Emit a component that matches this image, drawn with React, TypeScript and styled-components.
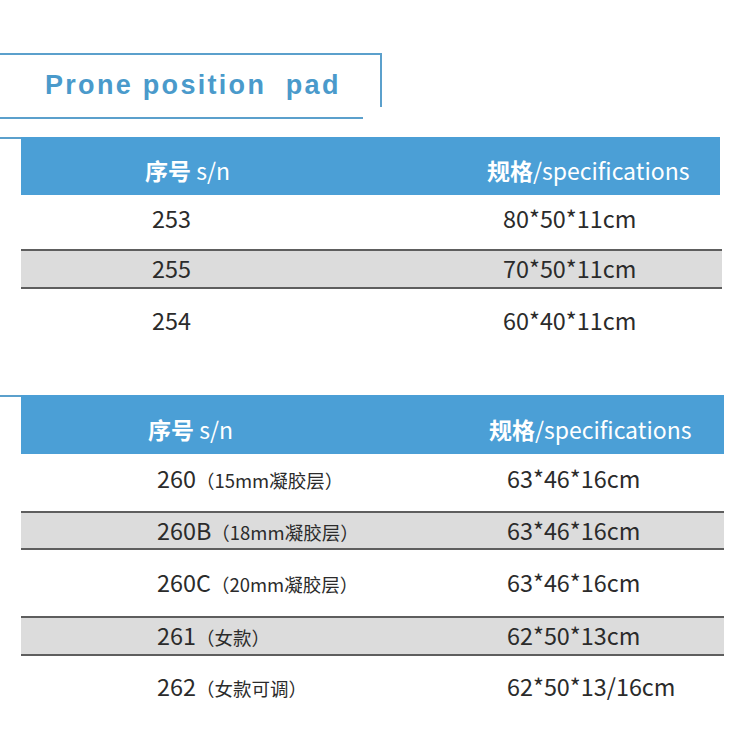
import React from "react";
import styled, { createGlobalStyle } from "styled-components";

const GlobalStyle = createGlobalStyle`
  html, body {
    margin: 0;
    padding: 0;
    background: #ffffff;
  }
  body {
    font-family: "Noto Sans CJK SC", "Noto Sans", sans-serif;
  }
`;

const Page = styled.div`
  width: 750px;
  height: 750px;
  overflow: hidden;
  display: flex;
  flex-flow: column;
`;

const TitleBox = styled.div`
  margin-top: 53px;
  width: 382px;
  height: 54px;
  border-top: 2px solid #5ba0cc;
  border-right: 2px solid #5ba0cc;
  display: flex;
  align-items: center;
  padding-left: 45px;
  padding-top: 9px;
  box-sizing: border-box;
`;

const Title = styled.h1`
  margin: 0;
  font-family: "Liberation Sans", Arial, sans-serif;
  font-weight: 700;
  font-size: 27px;
  letter-spacing: 2.3px;
  color: #4a9acb;
  white-space: pre;
`;

const TitleRule = styled.div`
  margin-top: 10px;
  width: 363px;
  height: 2px;
  background: #5ba0cc;
`;

const Table = styled.div<{ $top: number; $right: number }>`
  margin-top: ${(p) => p.$top}px;
  width: ${(p) => p.$right}px;
  display: flex;
  flex-flow: column;
`;

const HeadLine = styled.div`
  display: flex;
`;

const Tick = styled.div`
  width: 21px;
  height: 2px;
  background: #5ba0cc;
`;

const HeadBar = styled.div<{ $height: number; $c1: number; $c2: number; $trim: number }>`
  flex: 1;
  margin-right: ${(p) => p.$trim}px;
  height: ${(p) => p.$height}px;
  background: #4b9fd6;
  color: #ffffff;
  display: grid;
  grid-template-columns: ${(p) => p.$c2 - p.$c1}px 1fr;
  padding-left: ${(p) => p.$c1}px;
  align-items: center;
  padding-top: 8px;
  box-sizing: border-box;
`;

const HeadCell = styled.div`
  font-size: 23px;
  white-space: nowrap;
`;

const Strong = styled.span`
  font-weight: 700;
`;

const Latin = styled.span`
  font-weight: 400;
`;

const Row = styled.div<{
  $height: number;
  $shift: number;
  $grey?: boolean;
  $c1: number;
  $c2: number;
}>`
  margin-left: 21px;
  height: ${(p) => p.$height}px;
  display: grid;
  grid-template-columns: ${(p) => p.$c2 - p.$c1}px 1fr;
  padding-left: ${(p) => p.$c1}px;
  align-items: center;
  box-sizing: border-box;
  padding-bottom: ${(p) => p.$shift}px;
  background: ${(p) => (p.$grey ? "#dcdcdc" : "transparent")};
  border-top: ${(p) => (p.$grey ? "2px solid #5e5e5e" : "none")};
  border-bottom: ${(p) => (p.$grey ? "2px solid #5e5e5e" : "none")};
`;

const Cell = styled.div`
  font-size: 23.4px;
  color: #2b2b2b;
  white-space: nowrap;
  line-height: 1;
`;

const Note = styled.span`
  font-size: 18.5px;
`;

type Item = { code: string; note?: string; size: string; h: number; shift: number };

const table1: Item[] = [
  { code: "253", size: "80*50*11cm", h: 54, shift: 6 },
  { code: "255", size: "70*50*11cm", h: 40, shift: 0 },
  { code: "254", size: "60*40*11cm", h: 64, shift: 0 },
];

const table2: Item[] = [
  { code: "260", note: "（15mm凝胶层）", size: "63*46*16cm", h: 57, shift: 7 },
  { code: "260B", note: "（18mm凝胶层）", size: "63*46*16cm", h: 39, shift: 0 },
  { code: "260C", note: "（20mm凝胶层）", size: "63*46*16cm", h: 66, shift: 0 },
  { code: "261", note: "（女款）", size: "62*50*13cm", h: 40, shift: 0 },
  { code: "262", note: "（女款可调）", size: "62*50*13/16cm", h: 62, shift: 0 },
];

function SpecTable(props: {
  items: Item[];
  top: number;
  right: number;
  trim: number;
  headHeight: number;
  head: [number, number];
  body: [number, number];
}) {
  const { items, top, right, trim, headHeight, head, body } = props;
  return (
    <Table $top={top} $right={right}>
      <HeadLine>
        <Tick />
        <HeadBar $height={headHeight} $c1={head[0]} $c2={head[1]} $trim={trim}>
          <HeadCell>
            <Strong>序号</Strong> <Latin>s/n</Latin>
          </HeadCell>
          <HeadCell>
            <Strong>规格</Strong>
            <Latin>/specifications</Latin>
          </HeadCell>
        </HeadBar>
      </HeadLine>
      {items.map((it, i) => (
        <Row
          key={it.code}
          $height={it.h}
          $shift={it.shift}
          $grey={i % 2 === 1}
          $c1={body[0]}
          $c2={body[1]}
        >
          <Cell>
            {it.code}
            {it.note && <Note>{it.note}</Note>}
          </Cell>
          <Cell>{it.size}</Cell>
        </Row>
      ))}
    </Table>
  );
}

export default function App() {
  return (
    <Page>
      <GlobalStyle />
      <TitleBox>
        <Title>Prone position  pad</Title>
      </TitleBox>
      <TitleRule />
      <SpecTable
        items={table1}
        top={18}
        right={722}
        trim={2}
        headHeight={58}
        head={[124, 466]}
        body={[131, 482]}
      />
      <SpecTable
        items={table2}
        top={42}
        right={724}
        trim={0}
        headHeight={59}
        head={[127, 468]}
        body={[136, 486]}
      />
    </Page>
  );
}
